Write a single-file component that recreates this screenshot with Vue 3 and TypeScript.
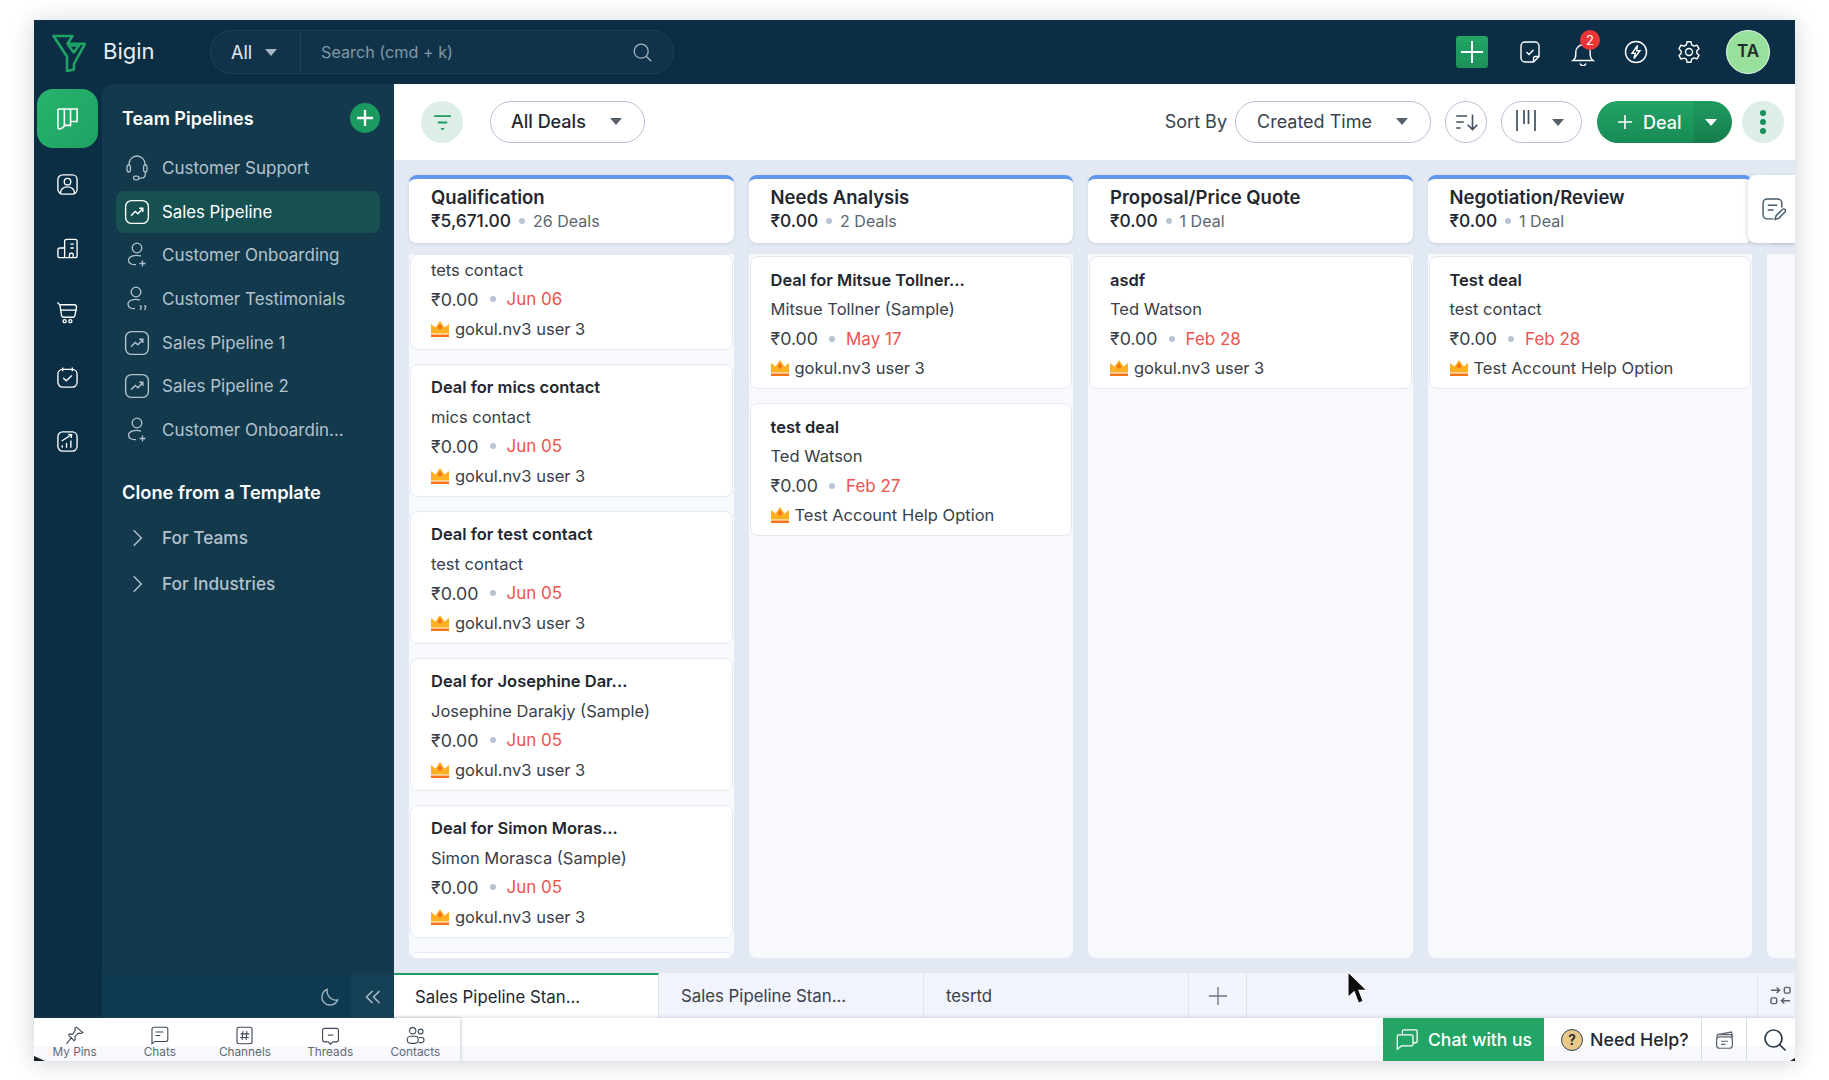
<template>
  <div class="page">
    <svg class="sprite" aria-hidden="true">
      <defs>
        <symbol id="i-trend" viewBox="0 0 24 24">
          <rect x="1.5" y="1.5" width="21" height="21" rx="5.5" />
          <path d="M6.5 15.5l3.8-4 2.6 2.2 4-4.4M14 8.600h3.4V12" />
        </symbol>
        <symbol id="i-person-plus" viewBox="0 0 20 26">
          <circle cx="10" cy="6" r="4.8" />
          <path d="M14 14.2c-5-1.8-12.5-.6-12.5 4.1 0 3 3.4 4.6 7.5 4.4" />
          <path d="M15.5 18.5v6M12.5 21.5h6" />
        </symbol>
        <symbol id="i-person-quote" viewBox="0 0 20 26">
          <circle cx="9" cy="6" r="4.8" />
          <path d="M13 14.2c-5-1.8-12-.6-12 4.1 0 3 3.2 4.6 7 4.4" />
          <path d="M12.6 20.2h1.6v1.4c0 1-.5 1.7-1.4 2.1M17 20.2h1.6v1.4c0 1-.5 1.7-1.4 2.1" />
        </symbol>
        <symbol id="i-headset" viewBox="0 0 22 26">
          <path d="M3 10V9a8 8 0 0 1 16 0v1" />
          <rect x="1" y="10" width="3.4" height="7" rx="1.7" />
          <rect x="17.6" y="10" width="3.4" height="7" rx="1.7" />
          <path d="M19.3 17v2.5c0 2.2-2 3.6-4.5 3.6H12" />
          <rect x="7.5" y="21.2" width="5.5" height="3.6" rx="1.8" />
        </symbol>
        <symbol id="i-board" viewBox="0 0 24 24">
          <path d="M3.5 3.5h17v11.2h-5.800V3.500M9.200 3.500v14.600c0 .8-.5 1.400-1.300 1.900l-2.200 1.200c-1 .5-2.200-.2-2.200-1.400V3.500M9.200 3.500h5.500v14.600l-5.500 0" />
        </symbol>
        <symbol id="i-contact" viewBox="0 0 24 24">
          <rect x="2" y="2" width="20" height="20" rx="5" />
          <circle cx="12" cy="9" r="3.4" />
          <path d="M4.5 21c.5-4.4 3.6-6.6 7.5-6.6s7 2.2 7.5 6.6" />
        </symbol>
        <symbol id="i-company" viewBox="0 0 24 24">
          <path d="M9 21.5H4a2 2 0 0 1-2-2v-6a2 2 0 0 1 2-2h5" />
          <path d="M9 21.5V4.5a2 2 0 0 1 2-2h9a2 2 0 0 1 2 2v15a2 2 0 0 1-2 2z" />
          <path d="M15 7.500h3.500M15 11.500h3.500M14 21.500v-3a1.500 1.500 0 0 1 1.500-1.500h1a1.500 1.500 0 0 1 1.500 1.500v3" />
        </symbol>
        <symbol id="i-cart" viewBox="0 0 24 24">
          <path d="M1.500 1.500l2.500 2.400 1.800 11a2.500 2.500 0 0 0 2.500 2.100h9a2.500 2.500 0 0 0 2.500-2.100l1.600-8.400c.3-1.500-.8-2.600-2.200-2.600H4" />
          <path d="M5 9.500h17" />
          <circle cx="9" cy="21" r="1.6" />
          <circle cx="15" cy="21" r="1.6" />
        </symbol>
        <symbol id="i-calendar" viewBox="0 0 24 24">
          <rect x="2" y="3.500" width="20" height="18.500" rx="5" />
          <path d="M7 1.500v4M17 1.500v4M7.500 12.500l3.200 3 5.800-5.500" />
        </symbol>
        <symbol id="i-report" viewBox="0 0 24 24">
          <rect x="2" y="2" width="20" height="20" rx="5" />
          <path d="M6.500 18.500v-2.500M11 18.500v-5M15.500 18.500v-7.500M6 11.500l10-6.500M12.500 4.600l3.800.2-.6 3.700" />
        </symbol>
      </defs>
    </svg>

    <div class="window">
      <header class="topbar">
        <svg class="logo" viewBox="0 0 34 38" fill="none" stroke="#1ea365" stroke-width="2.6" stroke-linejoin="round">
          <path d="M1.500 2h19l-5 7.700H33L22 30v5.500L15 37V22.500z" />
          <path d="M16.500 11.500h10.500l-5.200 7z" />
        </svg>
        <span class="brand">Bigin</span>
        <div class="search">
          <div class="search-scope">All <i class="caret caret-light"></i></div>
          <div class="search-input">
            <span>Search (cmd + k)</span>
            <svg viewBox="0 0 24 24" class="search-icon" fill="none" stroke="currentColor" stroke-width="1.5">
              <circle cx="10.5" cy="10.5" r="8" />
              <path d="M16.5 16.5l5.500 5.500" />
            </svg>
          </div>
        </div>
        <div class="top-actions">
          <button class="top-plus" aria-label="Create">
            <svg viewBox="0 0 32 32" fill="none" stroke="#fff" stroke-width="2"><path d="M16 5v22M5 16h22" /></svg>
          </button>
          <span class="top-slot">
            <svg viewBox="0 0 24 24" class="top-icon" fill="none" stroke="#fff" stroke-width="1.4">
              <path d="M15.500 22H7a4 4 0 0 1-4-4V6a4 4 0 0 1 4-4h10a4 4 0 0 1 4 4v10.500z" />
              <path d="M15.500 22v-3.500a2 2 0 0 1 2-2H21M8.500 12l2.500 2.500 4.500-4.500" />
            </svg>
          </span>
          <span class="top-slot bell">
            <svg viewBox="0 0 24 24" class="top-icon" fill="none" stroke="#fff" stroke-width="1.4">
              <path d="M2 18.500c1.800-1.300 2.800-3 2.800-6V10a7.200 7.200 0 0 1 14.400 0v2.500c0 3 1 4.700 2.800 6z" />
              <path d="M9 21.500a3.200 3.200 0 0 0 6 0" />
            </svg>
            <b class="badge">2</b>
          </span>
          <span class="top-slot">
            <svg viewBox="0 0 24 24" class="top-icon" fill="none" stroke="#fff" stroke-width="1.4">
              <circle cx="12" cy="12" r="10.5" />
              <path d="M13.500 5.500L8 13.200h3.300L10 18.500l6-7.700h-3.400z" />
            </svg>
          </span>
          <span class="top-slot">
            <svg viewBox="0 0 24 24" class="top-icon" fill="none" stroke="#fff" stroke-width="1.4">
              <circle cx="12" cy="12" r="3.5" />
              <path d="M10 1.800h4l.7 3 2.300 1.300 3-.9 2 3.500-2.200 2.100v2.400l2.200 2.100-2 3.500-3-.9-2.300 1.300-.7 3h-4l-.7-3L7 18.200l-3 .9-2-3.500 2.200-2.100v-2.400L2 8.700l2-3.500 3 .9 2.300-1.300z" stroke-linejoin="round" />
            </svg>
          </span>
          <div class="avatar">TA</div>
        </div>
      </header>

      <div class="middle">
        <nav class="rail">
          <div class="rail-active">
            <svg class="rail-icon"><use href="#i-board" /></svg>
          </div>
          <div v-for="icon in railIcons" :key="icon" class="rail-item">
            <svg class="rail-icon"><use :href="`#i-${icon}`" /></svg>
          </div>
        </nav>

        <aside class="sidebar">
          <div class="side-body">
            <div class="side-head">
              <span>Team Pipelines</span>
              <button class="side-plus" aria-label="Add pipeline">
                <svg viewBox="0 0 30 30" fill="none" stroke="#fff" stroke-width="2.4"><path d="M15 7v16M7 15h16" /></svg>
              </button>
            </div>
            <div
              v-for="item in pipelines"
              :key="item.name"
              class="side-item"
              :class="{ active: item.active }"
            >
              <span class="side-icon">
                <svg :class="`sz-${item.icon}`"><use :href="`#i-${item.icon}`" /></svg>
              </span>
              <span>{{ item.name }}</span>
            </div>
            <div class="side-head clone">Clone from a Template</div>
            <div v-for="t in templates" :key="t" class="side-item tpl">
              <span class="side-icon">
                <svg class="chev" viewBox="0 0 10 16" fill="none" stroke="currentColor" stroke-width="1.5"><path d="M1.500 1l7 7-7 7" /></svg>
              </span>
              <span>{{ t }}</span>
            </div>
          </div>
          <div class="side-foot">
            <svg class="moon" viewBox="0 0 20 20" fill="none" stroke="#9fb2bf" stroke-width="1.5">
              <path d="M7.500 1.500a8.500 8.500 0 1 0 11 11c-5.500 1.500-12-4-11-11z" />
            </svg>
            <span class="collapse">
              <svg viewBox="0 0 16 14" fill="none" stroke="#a9bac6" stroke-width="1.6"><path d="M7.500 1L1.500 7l6 6M14.500 1l-6 6 6 6" /></svg>
            </span>
          </div>
        </aside>

        <main class="main">
          <div class="toolbar">
            <button class="tool-round mint" aria-label="Filter">
              <svg viewBox="0 0 20 20" fill="none" stroke="#1d9c62" stroke-width="1.7"><path d="M2 4h16M5.500 10h9M8.500 16h3" /></svg>
            </button>
            <button class="pill all-deals">All Deals <i class="caret"></i></button>
            <span class="sort-label">Sort By</span>
            <button class="pill sort-by">Created Time <i class="caret"></i></button>
            <button class="tool-round outline" aria-label="Sort order">
              <svg viewBox="0 0 24 24" fill="none" stroke="#3f5060" stroke-width="1.5"><path d="M3 6.500h10M3 12h7M3 17.500h4M18 5v14M13.500 14.500L18 19l4.500-4.500" /></svg>
            </button>
            <button class="pill view-pill" aria-label="View">
              <svg viewBox="0 0 22 24" fill="none" stroke="#3f5060" stroke-width="1.7"><path d="M2 1v21M9 1v14M13.500 1v14M20 1v21" /></svg>
              <i class="caret"></i>
            </button>
            <div class="deal-btn">
              <span class="deal-main">
                <svg viewBox="0 0 18 18" fill="none" stroke="#fff" stroke-width="1.8"><path d="M9 1v16M1 9h16" /></svg>
                Deal
              </span>
              <span class="deal-more"><i class="caret caret-white"></i></span>
            </div>
            <button class="tool-round mint kebab" aria-label="More">
              <i></i><i></i><i></i>
            </button>
          </div>

          <section class="board">
            <div v-for="col in columns" :key="col.title" class="column">
              <div class="col-head">
                <div class="col-title">{{ col.title }}</div>
                <div class="col-sub">
                  <b>{{ col.total }}</b><i class="dot"></i><span>{{ col.count }}</span>
                </div>
              </div>
              <div class="col-body" :class="{ scrolled: col.scrolled }">
                <article
                  v-for="(deal, i) in col.deals"
                  :key="i"
                  class="card"
                  :class="{ cut: !deal.title }"
                >
                  <div v-if="deal.title" class="card-title">{{ deal.title }}</div>
                  <div class="card-row">{{ deal.contact }}</div>
                  <div class="card-row">
                    <span class="price">₹0.00</span><i class="dot"></i><span class="date">{{ deal.date }}</span>
                  </div>
                  <div class="card-row owner">
                    <svg class="crown" viewBox="0 0 18 16">
                      <path fill="#fdb022" d="M0 3l4.500 3.500L9 0l4.500 6.500L18 3v9.500H0z" />
                      <path fill="#f97316" d="M9 2.500l2.500 4-2.500 2.500-2.500-2.500zM0 13.500h18V16H0z" />
                    </svg>
                    {{ deal.owner }}
                  </div>
                </article>
                <div v-if="col.scrolled" class="card stub"></div>
              </div>
            </div>
            <div class="note-tab">
              <svg viewBox="0 0 24 24" fill="none" stroke="#45596a" stroke-width="1.4">
                <path d="M12 21H6a4 4 0 0 1-4-4V6a4 4 0 0 1 4-4h10a4 4 0 0 1 4 4v4" />
                <path d="M6.500 8h9M6.500 12.500h5.500M13.500 21.500l1-3.500 6-6a1.500 1.500 0 0 1 2.500 2.500l-6 6z" />
              </svg>
            </div>
          </section>

          <div class="tabs">
            <div v-for="(tab, i) in tabs" :key="i" class="tab" :class="{ active: i === 0 }">{{ tab }}</div>
            <div class="tab-add">
              <svg viewBox="0 0 18 18" fill="none" stroke="#69737e" stroke-width="1.3"><path d="M9 0v18M0 9h18" /></svg>
            </div>
            <div class="tab-fill"></div>
            <div class="tab-fit">
              <svg viewBox="0 0 22 22" fill="none" stroke="#55616d" stroke-width="1.5">
                <path d="M1 5.500h9M7 2.500l3 3-3 3M21 16.500h-9M15 13.500l-3 3 3 3" />
                <rect x="15" y="2.5" width="6" height="6" rx="1.5" />
                <rect x="1" y="13.5" width="6" height="6" rx="1.5" />
              </svg>
            </div>
          </div>
        </main>
      </div>

      <footer class="bottombar">
        <div class="quick">
          <div v-for="q in quickLinks" :key="q.label" class="quick-item">
            <svg viewBox="0 0 24 24" fill="none" stroke="#3e4a57" stroke-width="1.4" v-html="q.path"></svg>
            <span>{{ q.label }}</span>
          </div>
        </div>
        <div class="bottom-fill"></div>
        <div class="chat-btn">
          <svg viewBox="0 0 26 24" fill="none" stroke="#fff" stroke-width="1.4">
            <path d="M8 7V3a1.500 1.500 0 0 1 1.500-1.500h13A1.500 1.500 0 0 1 24 3v11a1.500 1.500 0 0 1-1.500 1.500H20" />
            <path d="M3 7h15a1.500 1.500 0 0 1 1.500 1.500v9A1.500 1.500 0 0 1 18 19H7l-4.500 3.500V8.500A1.500 1.500 0 0 1 3 7z" />
          </svg>
          Chat with us
        </div>
        <div class="help">
          <span class="help-mark">?</span>
          Need Help?
        </div>
        <div class="bottom-cell notes">
          <svg viewBox="0 0 24 24" fill="none" stroke="#5c6670" stroke-width="1.4">
            <path d="M4 6.500l16-3 1.500 6M3 10l1-3.500h16l1 3.500" />
            <rect x="3" y="9" width="18" height="13" rx="3.5" />
            <path d="M8 14h8M8 17.500h5" />
          </svg>
        </div>
        <div class="bottom-cell find">
          <svg viewBox="0 0 24 24" fill="none" stroke="#2a3a48" stroke-width="1.7">
            <circle cx="10.5" cy="10.5" r="8.5" />
            <path d="M16.500 16.500l6 6" />
          </svg>
        </div>
      </footer>

      <svg class="pointer" viewBox="0 0 22 36">
        <path d="M1 1v27l6.500-6 4.500 12 5-2-4.500-11.500H21z" fill="#0c0c0c" stroke="#fff" stroke-width="1.2" />
      </svg>
      <i class="corner corner-left"></i>
      <i class="corner corner-right"></i>
    </div>
  </div>
</template>

<script setup lang="ts">
interface Deal {
  title: string
  contact: string
  date: string
  owner: string
}

interface Column {
  title: string
  total: string
  count: string
  scrolled?: boolean
  deals: Deal[]
}

const railIcons = ['contact', 'company', 'cart', 'calendar', 'report']

const pipelines = [
  { name: 'Customer Support', icon: 'headset' },
  { name: 'Sales Pipeline', icon: 'trend', active: true },
  { name: 'Customer Onboarding', icon: 'person-plus' },
  { name: 'Customer Testimonials', icon: 'person-quote' },
  { name: 'Sales Pipeline 1', icon: 'trend' },
  { name: 'Sales Pipeline 2', icon: 'trend' },
  { name: 'Customer Onboardin...', icon: 'person-plus' },
]

const templates = ['For Teams', 'For Industries']

const owner = 'gokul.nv3 user 3'
const helpOwner = 'Test Account Help Option'

const columns: Column[] = [
  {
    title: 'Qualification',
    total: '₹5,671.00',
    count: '26 Deals',
    scrolled: true,
    deals: [
      { title: '', contact: 'tets contact', date: 'Jun 06', owner },
      { title: 'Deal for mics contact', contact: 'mics contact', date: 'Jun 05', owner },
      { title: 'Deal for test contact', contact: 'test contact', date: 'Jun 05', owner },
      { title: 'Deal for Josephine Dar...', contact: 'Josephine Darakjy (Sample)', date: 'Jun 05', owner },
      { title: 'Deal for Simon Moras...', contact: 'Simon Morasca (Sample)', date: 'Jun 05', owner },
    ],
  },
  {
    title: 'Needs Analysis',
    total: '₹0.00',
    count: '2 Deals',
    deals: [
      { title: 'Deal for Mitsue Tollner...', contact: 'Mitsue Tollner (Sample)', date: 'May 17', owner },
      { title: 'test deal', contact: 'Ted Watson', date: 'Feb 27', owner: helpOwner },
    ],
  },
  {
    title: 'Proposal/Price Quote',
    total: '₹0.00',
    count: '1 Deal',
    deals: [{ title: 'asdf', contact: 'Ted Watson', date: 'Feb 28', owner }],
  },
  {
    title: 'Negotiation/Review',
    total: '₹0.00',
    count: '1 Deal',
    deals: [{ title: 'Test deal', contact: 'test contact', date: 'Feb 28', owner: helpOwner }],
  },
  { title: '', total: '', count: '', deals: [] },
]

const tabs = ['Sales Pipeline Stan...', 'Sales Pipeline Stan...', 'tesrtd']

const quickLinks = [
  {
    label: 'My Pins',
    path: '<path d="M14.500 1.500l8 7-2 1-3.500-.5-4.500 4.500.5 3.500-1.500 1.500-7-7 1.500-1.500 3.500.5L13 5.500l-.5-3zM8.500 14l-6.500 8.500" />',
  },
  {
    label: 'Chats',
    path: '<path d="M5 1.500h15a2.500 2.500 0 0 1 2.500 2.500v13a2.500 2.500 0 0 1-2.500 2.500H6l-3.500 3V4A2.500 2.500 0 0 1 5 1.500z" /><path d="M7 7.500h10M7 12h6" />',
  },
  {
    label: 'Channels',
    path: '<rect x="2.5" y="1.5" width="19" height="21" rx="2.5" /><path d="M10 6.500l-1 11M15 6.500l-1 11M7 10h11M6.500 14.500h11" />',
  },
  {
    label: 'Threads',
    path: '<path d="M4.500 3h15A2.500 2.500 0 0 1 22 5.500v12a2.500 2.500 0 0 1-2.500 2.500h-4.500L12 23l-3-3H4.500A2.500 2.500 0 0 1 2 17.500v-12A2.500 2.500 0 0 1 4.500 3z" /><path d="M8.500 11.500h7" />',
  },
  {
    label: 'Contacts',
    path: '<circle cx="8.5" cy="6" r="4" /><circle cx="18.5" cy="7" r="3" /><rect x="1.5" y="13" width="14" height="9" rx="4.5" /><path d="M16 14.500h3.500a3 3 0 0 1 0 6.500H16" />',
  },
]
</script>

<style scoped>
.page {
  width: 1829px;
  height: 1080px;
  box-sizing: border-box;
  padding: 20px 34px 19px 34px;
  background: #fff;
  font-family: Inter, "Noto Sans", sans-serif;
  color: #23272f;
  overflow: hidden;
}

.sprite {
  width: 0;
  height: 0;
  position: absolute;
}

.window {
  position: relative;
  height: 100%;
  display: grid;
  grid-template-rows: 64px 1fr 43px;
  grid-template-columns: minmax(0, 1fr);
  box-shadow: 0 2px 22px rgba(20, 30, 45, 0.2);
  background: #fff;
  overflow: hidden;
}

button {
  font-family: inherit;
  padding: 0;
  cursor: pointer;
}

i {
  font-style: normal;
}

.caret {
  display: inline-block;
  width: 0;
  height: 0;
  border-left: 6px solid transparent;
  border-right: 6px solid transparent;
  border-top: 7px solid #55606b;
}

.caret-light {
  border-top-color: #a9b8c4;
}

.caret-white {
  border-top-color: #fff;
}

/* top bar */
.topbar {
  display: flex;
  align-items: center;
  background: #0b2e44;
  padding: 0 25px 0 18px;
  color: #fff;
}

.logo {
  width: 34px;
  height: 38px;
  flex: none;
  margin-top: 2px;
}

.brand {
  width: 124px;
  padding-left: 17px;
  box-sizing: border-box;
  flex: none;
  font-size: 22px;
  padding-bottom: 2px;
  color: #e8eef2;
}

.search {
  width: 464px;
  height: 44px;
  box-sizing: border-box;
  display: flex;
  border: 1px solid #1c4258;
  border-radius: 22px;
  background: #113349;
  font-size: 16.2px;
}

.search-scope {
  width: 90px;
  flex: none;
  display: flex;
  align-items: center;
  gap: 13px;
  padding-left: 20px;
  box-sizing: border-box;
  border-right: 1px solid #1c4258;
  color: #e5ebef;
  font-size: 18px;
}

.search-input {
  flex: 1;
  display: flex;
  align-items: center;
  justify-content: space-between;
  padding: 0 20px;
  color: #8297a6;
}

.search-icon {
  width: 21px;
  height: 21px;
  color: #a7b6c1;
}

.top-actions {
  margin-left: auto;
  display: flex;
  align-items: center;
}

.top-plus {
  width: 32px;
  height: 32px;
  margin-right: 17px;
  border: 0;
  border-radius: 3px;
  background: linear-gradient(#22a565, #1c9159);
}

.top-slot {
  position: relative;
  width: 50px;
  margin-right: 3px;
  display: flex;
  justify-content: center;
}

.top-slot.bell .top-icon {
  margin-top: 3px;
}

.top-icon {
  width: 24px;
  height: 24px;
}

.badge {
  position: absolute;
  left: 22px;
  top: -9px;
  width: 20px;
  height: 20px;
  border-radius: 50%;
  background: #ee3535;
  color: #fff;
  font-size: 13px;
  font-weight: 400;
  line-height: 20px;
  text-align: center;
}

.avatar {
  width: 44px;
  height: 44px;
  margin-left: 9px;
  box-sizing: border-box;
  border: 1.5px solid #eef6ee;
  border-radius: 50%;
  background: #98e09c;
  color: #1f2a2a;
  font-size: 17px;
  font-weight: 600;
  line-height: 41px;
  text-align: center;
}

/* left rail */
.middle {
  display: flex;
  min-height: 0;
  background: #0a2f45;
}

.rail {
  width: 68px;
  flex: none;
  display: flex;
  flex-direction: column;
  align-items: center;
  color: #fff;
  padding-right: 1px;
  box-sizing: border-box;
}

.rail-active {
  width: 61px;
  height: 59px;
  margin: 5px 0 4px;
  border-radius: 16px;
  background: linear-gradient(135deg, #27b36d, #1fa263);
  display: flex;
  align-items: center;
  justify-content: center;
}

.rail-active .rail-icon {
  width: 27px;
  height: 27px;
}

.rail-item {
  height: 64.3px;
  display: flex;
  align-items: center;
}

.rail-icon {
  width: 23px;
  height: 23px;
  fill: none;
  stroke: currentColor;
  stroke-width: 1.4;
}

/* sidebar */
.sidebar {
  width: 292px;
  flex: none;
  display: flex;
  flex-direction: column;
  border-top-left-radius: 10px;
  background: #12394c;
  overflow: hidden;
}

.side-body {
  flex: 1;
  padding-top: 14px;
}

.side-head {
  display: flex;
  align-items: center;
  justify-content: space-between;
  height: 40px;
  margin: 0 14px 8px 20px;
  color: #fff;
  font-size: 18px;
  font-weight: 600;
}

.side-head.clone {
  margin-top: 20px;
  margin-bottom: 3px;
  font-size: 18.3px;
}

.side-plus {
  width: 30px;
  height: 30px;
  border: 0;
  border-radius: 50%;
  background: #1a9a5f;
}

.side-item {
  display: flex;
  align-items: center;
  height: 43.7px;
  margin: 0 14px;
  padding-left: 9px;
  border-radius: 8px;
  color: #b3c2cd;
  font-size: 17px;
}

.side-item.active {
  height: 42px;
  margin-top: 1px;
  margin-bottom: 0.7px;
  background: #175050;
  color: #fff;
  font-size: 16.8px;
}

.side-item.tpl {
  height: 46px;
  font-size: 17.3px;
  font-weight: 500;
}

.side-icon {
  width: 24px;
  margin-right: 13px;
  display: flex;
  justify-content: center;
}

.side-icon svg {
  flex: none;
  fill: none;
  stroke: currentColor;
  stroke-width: 1.3;
}

.sz-trend {
  width: 26px;
  height: 26px;
}

.sz-person-plus,
.sz-person-quote {
  width: 20px;
  height: 26px;
}

.sz-headset {
  width: 22px;
  height: 26px;
}

.chev {
  width: 11px;
  height: 18px;
}

.side-foot {
  height: 43px;
  flex: none;
  display: flex;
  align-items: stretch;
  justify-content: flex-end;
  background: #0d3a50;
}

.moon {
  width: 19px;
  height: 19px;
  margin: 13px 12px 0 0;
}

.collapse {
  width: 43px;
  display: flex;
  align-items: center;
  justify-content: center;
  background: #154056;
}

.collapse svg {
  width: 16px;
  height: 14px;
}

/* main */
.main {
  flex: 1;
  min-width: 0;
  display: flex;
  flex-direction: column;
  background: #e2e9f3;
}

.toolbar {
  height: 76px;
  flex: none;
  display: flex;
  align-items: center;
  padding: 0 11px 0 27px;
  background: #fff;
}

.tool-round {
  width: 42px;
  height: 42px;
  flex: none;
  border-radius: 50%;
  display: flex;
  align-items: center;
  justify-content: center;
  background: #fff;
}

.tool-round.mint {
  border: 0;
  background: #dceee6;
}

.tool-round.mint svg {
  width: 21px;
  height: 21px;
}

.tool-round.outline {
  margin-left: 14px;
  border: 1.5px solid #b5c3d4;
}

.tool-round.outline svg {
  width: 26px;
  height: 26px;
}

.pill {
  height: 42px;
  flex: none;
  box-sizing: border-box;
  border: 1.5px solid #b5c3d4;
  border-radius: 21px;
  background: #fff;
  display: flex;
  align-items: center;
  justify-content: space-between;
  color: #23272f;
  font-size: 18px;
}

.all-deals {
  width: 155px;
  margin-left: 27px;
  margin-right: auto;
  padding: 0 22px 2px 20px;
  font-weight: 500;
}

.sort-label {
  margin-right: 8px;
  padding-bottom: 2px;
  color: #39424c;
  font-size: 18px;
}

.sort-by {
  width: 196px;
  padding: 0 22px 2px 21px;
  color: #39424c;
}

.view-pill {
  width: 81px;
  margin-left: 14px;
  padding: 0 17px 0 13px;
}

.view-pill svg {
  width: 22px;
  height: 24px;
  margin-bottom: 3px;
}

.deal-btn {
  width: 135px;
  height: 42px;
  margin-left: 15px;
  display: flex;
  border-radius: 21px;
  overflow: hidden;
  color: #fff;
  font-size: 18px;
  font-weight: 500;
}

.deal-main {
  width: 97px;
  display: flex;
  align-items: center;
  gap: 10px;
  padding-left: 20px;
  box-sizing: border-box;
  background: linear-gradient(#22a565, #188a55);
}

.deal-main svg {
  width: 16px;
  height: 16px;
}

.deal-more {
  flex: 1;
  display: flex;
  align-items: center;
  justify-content: center;
  padding-right: 4px;
  background: linear-gradient(#1e9a5e, #167d4d);
}

.kebab {
  margin-left: 10px;
  flex-direction: column;
  gap: 3px;
}

.kebab i {
  width: 6px;
  height: 6px;
  border-radius: 50%;
  background: #1a8f59;
}

/* board */
.board {
  position: relative;
  flex: 1;
  min-height: 0;
  display: flex;
  gap: 15px;
  padding: 15px 0 15px 15px;
  overflow: hidden;
}

.column {
  width: 324.5px;
  flex: none;
  display: flex;
  flex-direction: column;
  gap: 11px;
}

.col-head {
  height: 68px;
  flex: none;
  box-sizing: border-box;
  padding: 6px 0 0 22px;
  border-top: 4px solid #6297ef;
  border-radius: 8px;
  background: #fff;
  box-shadow: 0 1px 3px rgba(60, 80, 110, 0.14);
}

.col-title {
  height: 24px;
  line-height: 24px;
  font-size: 18.5px;
  font-weight: 600;
}

.col-sub {
  height: 24px;
  line-height: 24px;
  display: flex;
  align-items: center;
  font-size: 16px;
}

.col-sub b {
  font-size: 17.4px;
  font-weight: 500;
}

.col-sub span {
  color: #5b6570;
}

.col-sub .dot {
  margin: 0 8px;
}

.dot {
  width: 6px;
  height: 6px;
  margin: 0 11px;
  border-radius: 50%;
  background: #b8c4d2;
}

.col-body {
  flex: 1;
  min-height: 0;
  display: flex;
  flex-direction: column;
  gap: 14px;
  padding: 2px 1px 0;
  border-radius: 0 0 8px 8px;
  background: #f7f9fd;
  overflow: hidden;
}

.col-body.scrolled {
  padding-top: 0;
}

.card {
  flex: none;
  box-sizing: border-box;
  padding: 8px 20px 5px;
  border: 1px solid #e3e9f2;
  border-radius: 8px;
  background: #fff;
}

.card.cut {
  padding-top: 0;
}

.card.stub {
  height: 40px;
}

.card-title,
.card-row {
  height: 29.5px;
  display: flex;
  align-items: center;
  white-space: nowrap;
  font-size: 16.5px;
}

.card-title {
  font-weight: 600;
}

.card-row {
  color: #3a4048;
}

.price {
  font-size: 17.8px;
}

.date {
  color: #ef5350;
  font-size: 17px;
}

.owner {
  gap: 6px;
}

.crown {
  width: 18px;
  height: 16px;
  flex: none;
}

.note-tab {
  position: absolute;
  top: 15px;
  right: 0;
  width: 47px;
  height: 68px;
  box-sizing: border-box;
  padding-left: 4px;
  display: flex;
  align-items: center;
  justify-content: center;
  border-radius: 8px 0 0 8px;
  background: #fff;
  box-shadow: -1px 1px 4px rgba(60, 80, 110, 0.2);
}

.note-tab svg {
  width: 25px;
  height: 25px;
}

/* tabs */
.tabs {
  height: 45px;
  flex: none;
  display: flex;
  background: #f1f4fc;
  font-size: 16.8px;
}

.tab {
  width: 265px;
  box-sizing: border-box;
  display: flex;
  align-items: center;
  padding-left: 22px;
  border-right: 1px solid #dfe5ef;
  color: #3a4048;
}

.tab.active {
  width: 265px;
  padding-left: 21px;
  border-top: 2px solid #1f9d63;
  background: #fff;
  color: #23272f;
}

.tab-add {
  width: 57px;
  display: flex;
  align-items: center;
  justify-content: center;
  border-right: 1px solid #dfe5ef;
}

.tab-add svg {
  width: 18px;
  height: 18px;
}

.tab-fill {
  flex: 1;
}

.tab-fit {
  width: 38px;
  box-sizing: border-box;
  padding-left: 7px;
  display: flex;
  align-items: center;
  justify-content: center;
  border-left: 1px solid #dfe5ef;
}

.tab-fit svg {
  width: 21px;
  height: 21px;
  flex: none;
}

/* bottom bar */
.bottombar {
  display: flex;
  box-shadow: 0 -1px 3px rgba(60, 80, 110, 0.2);
  background: linear-gradient(#fff 65%, #f8f9fc 65%);
  font-size: 17.8px;
  position: relative;
}

.quick {
  width: 426px;
  display: flex;
  box-shadow: 1px 0 3px rgba(60, 80, 110, 0.25);
}

.quick-item {
  width: 85.2px;
  display: flex;
  flex-direction: column;
  align-items: center;
  padding-top: 8px;
  box-sizing: border-box;
  color: #5e6a76;
  font-size: 11.8px;
}

.quick-item:first-child {
  margin-left: -2px;
}

.quick-item svg {
  width: 19px;
  height: 19px;
}

.bottom-fill {
  flex: 1;
}

.chat-btn {
  width: 161px;
  display: flex;
  align-items: center;
  justify-content: center;
  gap: 9px;
  background: #22a565;
  color: #fff;
  font-size: 17.5px;
  font-weight: 500;
}

.chat-btn svg {
  width: 24px;
  height: 23px;
}

.help {
  width: 158px;
  box-sizing: border-box;
  display: flex;
  align-items: center;
  gap: 7px;
  padding-left: 17px;
  border-right: 1px solid #d6dce4;
  font-weight: 500;
}

.help-mark {
  width: 22px;
  height: 22px;
  box-sizing: border-box;
  border: 1.5px solid #34424f;
  border-radius: 50%;
  background: #e8c98a;
  font-size: 14px;
  font-weight: 600;
  line-height: 19px;
  text-align: center;
}

.bottom-cell {
  display: flex;
  align-items: center;
  justify-content: center;
}

.notes {
  width: 44px;
  border-right: 1px solid #d6dce4;
}

.notes svg {
  width: 21px;
  height: 21px;
}

.find {
  width: 48px;
  box-sizing: border-box;
  padding-left: 8px;
}

.find svg {
  width: 24px;
  height: 24px;
  flex: none;
}

.pointer {
  position: absolute;
  left: 1313px;
  top: 950px;
  width: 21px;
  height: 36px;
}

.corner {
  position: absolute;
  bottom: 0;
  width: 0;
  height: 0;
}

.corner-left {
  left: 0;
  border-left: 11px solid #15212b;
  border-top: 5px solid transparent;
}

.corner-right {
  right: 0;
  border-right: 5px solid #15212b;
  border-top: 3px solid transparent;
}
</style>
